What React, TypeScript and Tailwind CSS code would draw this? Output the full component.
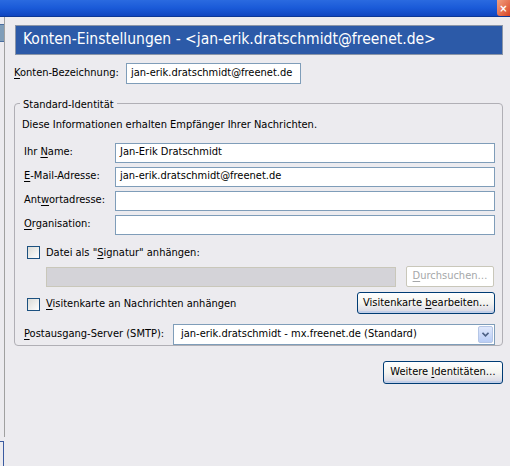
import React from 'react';

const font = { fontFamily: '"DejaVu Sans Condensed", "DejaVu Sans", sans-serif' };

const U = ({ children }: { children: React.ReactNode }) => <span className="underline underline-offset-2">{children}</span>;

const TextInput = ({ value = '', className = '' }: { value?: string; className?: string }) => (
    <div className={`h-[20px] border border-[#7f9db9] bg-white px-[4px] flex items-center text-black ${className}`}>
        {value}
    </div>
);

const XpButton = ({ children, className = '' }: { children: React.ReactNode; className?: string }) => (
    <div
        className={`h-[22px] rounded-[3px] border border-[#003c74] bg-gradient-to-b from-white via-[#f4f4f0] to-[#d6d6e4] flex items-center justify-center text-black shadow-[inset_0_-2px_0_#c2cfe8] ${className}`}
    >
        {children}
    </div>
);

const CheckBox = () => <div className="w-[13px] h-[13px] border border-[#1c5180] bg-gradient-to-br from-[#dcdcd7] to-white" />;

const FieldRow = ({ label, value }: { label: React.ReactNode; value?: string }) => (
    <div className="flex items-center">
        <div className="w-[91px] shrink-0">{label}</div>
        <TextInput value={value} className="flex-1" />
    </div>
);

export default function App() {
    return (
        <div className="w-[510px] h-[466px] bg-[#ecebef] text-[11px] text-black overflow-hidden flex flex-col" style={font}>
            {/* Window title bar */}
            <div className="h-[17px] shrink-0 bg-gradient-to-b from-[#2a6ae0] via-[#1a5ad8] to-[#0f45c0] border-b border-[#0b3796] flex justify-end">
                <div className="w-[13px] h-[16px] bg-gradient-to-br from-[#f0a080] to-[#d84020] rounded-bl-[3px] flex items-center justify-center text-white text-[11px] font-bold leading-none">
                    ×
                </div>
            </div>

            <div className="flex flex-1">
                {/* Left tree edge */}
                <div className="w-[5px] shrink-0 flex flex-col">
                    <div className="h-[420px] border-r border-[#a0a0a0] pt-[7px]">
                        <div className="h-[18px] w-[4px] bg-[#7f9db9] border-y border-[#4a6da0]" />
                    </div>
                    <div className="flex-1 mt-[4px] border-t border-r border-[#3a5aa0] w-[4px]" />
                </div>

                {/* Main panel */}
                <div className="flex-1 pl-[9px] pr-[7px] pt-[8px] flex flex-col">
                    <div className="ml-[1px] h-[30px] bg-[#2c5aa8] border border-[#8a95a8] flex items-center pl-[7px] text-white text-[15.5px]">
                        Konten-Einstellungen - &lt;jan-erik.dratschmidt@freenet.de&gt;
                    </div>

                    <div className="flex items-center mt-[8px]">
                        <div className="w-[112px]">
                            <U>K</U>onten-Bezeichnung:
                        </div>
                        <TextInput value="jan-erik.dratschmidt@freenet.de" className="w-[175px] h-[21px]" />
                    </div>

                    {/* Group box */}
                    <div className="relative mt-[19px] border border-[#b0afb5] rounded-[4px] pt-[13px] pb-[6px] pl-[9px] pr-[7px] h-[243px]">
                        <div className="absolute -top-[7px] left-[5px] bg-[#ecebef] px-[3px]">Standard-Identität</div>
                        <div className="ml-[-2px]">Diese Informationen erhalten Empfänger Ihrer Nachrichten.</div>

                        <div className="flex flex-col gap-[4px] mt-[9px]">
                            <FieldRow label={<>Ihr <U>N</U>ame:</>} value="Jan-Erik Dratschmidt" />
                            <FieldRow label={<><U>E</U>-Mail-Adresse:</>} value="jan-erik.dratschmidt@freenet.de" />
                            <FieldRow label={<>Ant<U>w</U>ortadresse:</>} />
                            <FieldRow label={<><U>O</U>rganisation:</>} />
                        </div>

                        <div className="flex items-center gap-[6px] mt-[10px] ml-[3px]">
                            <CheckBox />
                            <span>
                                Datei als "<U>S</U>ignatur" anhängen:
                            </span>
                        </div>

                        <div className="flex items-center mt-[5px] ml-[22px]">
                            <div className="w-[350px] h-[20px] border border-[#c9c7ba] bg-[#d4d3d8]" />
                            <div className="ml-[10px] w-[88px] h-[21px] border border-[#c9c7ba] rounded-[2px] bg-white flex items-center justify-center text-[#a5a7a9]">
                                <span>
                                    <U>D</U>urchsuchen…
                                </span>
                            </div>
                        </div>

                        <div className="flex items-center mt-[5px]">
                            <div className="flex items-center gap-[6px] ml-[3px] flex-1 pt-[2px]">
                                <CheckBox />
                                <span>
                                    <U>V</U>isitenkarte an Nachrichten anhängen
                                </span>
                            </div>
                            <XpButton className="w-[138px]">
                                <span>
                                    Visitenkarte <U>b</U>earbeiten…
                                </span>
                            </XpButton>
                        </div>

                        <div className="flex items-center mt-[10px]">
                            <div className="w-[149px]">
                                <U>P</U>ostausgang-Server (SMTP):
                            </div>
                            <div className="flex-1 h-[21px] border border-[#7f9db9] bg-white flex items-center">
                                <div className="flex-1 pl-[7px]">jan-erik.dratschmidt - mx.freenet.de (Standard)</div>
                                <div className="w-[15px] h-[17px] mr-[1px] rounded-[2px] border border-[#b5c6e6] bg-gradient-to-b from-[#e0e8fb] to-[#b9cdf6] flex items-center justify-center">
                                    <svg width="7" height="5" viewBox="0 0 7 5">
                                        <path d="M0.5 0.8 L3.5 3.8 L6.5 0.8" fill="none" stroke="#4d6185" strokeWidth="1.6" />
                                    </svg>
                                </div>
                            </div>
                        </div>
                    </div>

                    <div className="flex justify-end mt-[15px]">
                        <XpButton className="w-[120px] h-[23px]">
                            <span>
                                Weitere <U>I</U>dentitäten…
                            </span>
                        </XpButton>
                    </div>
                </div>
            </div>
        </div>
    );
}
